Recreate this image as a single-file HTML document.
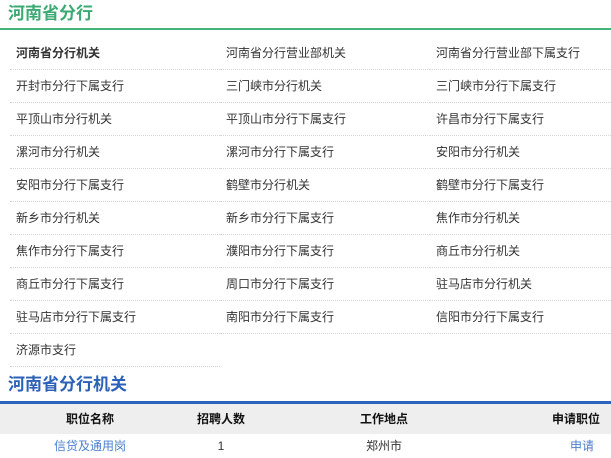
<!DOCTYPE html>
<html><head><meta charset="utf-8"><style>
*{margin:0;padding:0;box-sizing:border-box}
body{width:611px;height:458px;overflow:hidden;background:#fff;font-family:"Liberation Sans","Noto Sans CJK SC",sans-serif;position:relative;color:#333}
.t1{position:absolute;left:8px;top:3px;font-size:17px;font-weight:bold;color:#3aaa72;line-height:22px}
.g{position:absolute;left:0;top:28px;width:611px;height:2px;background:#42b47c}
.c{position:absolute;width:210px;height:33px;border-bottom:1px dotted #d6d6d6;font-size:12px;line-height:33px;padding-left:6px;color:#333}
.t2{position:absolute;left:8px;top:374px;font-size:17px;font-weight:bold;color:#2b62b8;line-height:22px}
.b{position:absolute;left:0;top:401px;width:611px;height:3px;background:#2c64bb}
.h{position:absolute;left:0;top:404px;width:611px;height:30px;background:#eee}
.x{position:absolute;font-size:12px;transform:translateX(-50%);white-space:nowrap;line-height:16px}
.hd{top:411px;font-weight:bold;color:#111}
.r{top:438px;color:#333}
</style></head><body>
<div class="t1">河南省分行</div><div class="g"></div>
<div class="c" style="left:10px;top:37px;font-weight:bold">河南省分行机关</div>
<div class="c" style="left:220px;top:37px">河南省分行营业部机关</div>
<div class="c" style="left:430px;top:37px;width:181px">河南省分行营业部下属支行</div>
<div class="c" style="left:10px;top:70px">开封市分行下属支行</div>
<div class="c" style="left:220px;top:70px">三门峡市分行机关</div>
<div class="c" style="left:430px;top:70px;width:181px">三门峡市分行下属支行</div>
<div class="c" style="left:10px;top:103px">平顶山市分行机关</div>
<div class="c" style="left:220px;top:103px">平顶山市分行下属支行</div>
<div class="c" style="left:430px;top:103px;width:181px">许昌市分行下属支行</div>
<div class="c" style="left:10px;top:136px">漯河市分行机关</div>
<div class="c" style="left:220px;top:136px">漯河市分行下属支行</div>
<div class="c" style="left:430px;top:136px;width:181px">安阳市分行机关</div>
<div class="c" style="left:10px;top:169px">安阳市分行下属支行</div>
<div class="c" style="left:220px;top:169px">鹤壁市分行机关</div>
<div class="c" style="left:430px;top:169px;width:181px">鹤壁市分行下属支行</div>
<div class="c" style="left:10px;top:202px">新乡市分行机关</div>
<div class="c" style="left:220px;top:202px">新乡市分行下属支行</div>
<div class="c" style="left:430px;top:202px;width:181px">焦作市分行机关</div>
<div class="c" style="left:10px;top:235px">焦作市分行下属支行</div>
<div class="c" style="left:220px;top:235px">濮阳市分行下属支行</div>
<div class="c" style="left:430px;top:235px;width:181px">商丘市分行机关</div>
<div class="c" style="left:10px;top:268px">商丘市分行下属支行</div>
<div class="c" style="left:220px;top:268px">周口市分行下属支行</div>
<div class="c" style="left:430px;top:268px;width:181px">驻马店市分行机关</div>
<div class="c" style="left:10px;top:301px">驻马店市分行下属支行</div>
<div class="c" style="left:220px;top:301px">南阳市分行下属支行</div>
<div class="c" style="left:430px;top:301px;width:181px">信阳市分行下属支行</div>
<div class="c" style="left:10px;top:334px">济源市支行</div>
<div class="t2">河南省分行机关</div><div class="b"></div><div class="h"></div>
<div class="x hd" style="left:90px">职位名称</div>
<div class="x hd" style="left:221px">招聘人数</div>
<div class="x hd" style="left:384px">工作地点</div>
<div class="x hd" style="left:576px">申请职位</div>
<div class="x r" style="left:90px;color:#4a7fd0">信贷及通用岗</div>
<div class="x r" style="left:221px">1</div>
<div class="x r" style="left:384px">郑州市</div>
<div class="x r" style="left:582px;color:#4a7fd0">申请</div>
</body></html>
